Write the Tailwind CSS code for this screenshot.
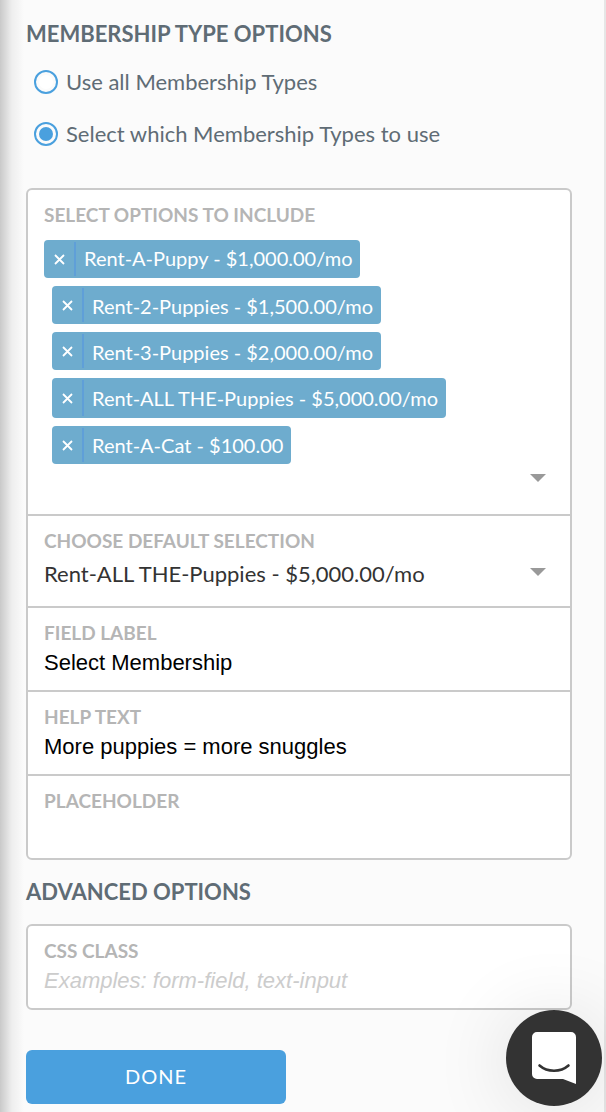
<!DOCTYPE html>
<html lang="en">
<head>
    <meta charset="UTF-8">
    <meta name="viewport" content="width=device-width, initial-scale=1.0">
    <title>Membership Type Options</title>
    <script src="https://cdn.jsdelivr.net/npm/@tailwindcss/browser@4"></script>
</head>
<body class="bg-[#fbfbfb] font-['Lato',sans-serif] text-[#5f6c75]">
    <form id="field-options" class="relative min-h-screen border-r-2 border-[#e6e6e6] pt-4 pr-8 pb-2 pl-[26px]">
        <!-- Shadow from the neighbouring panel -->
        <div class="pointer-events-none absolute inset-y-0 left-0 w-6 bg-linear-to-r from-black/20 via-black/5 to-transparent"></div>

        <h2 class="text-[22px] leading-9 font-bold">MEMBERSHIP TYPE OPTIONS</h2>
        <div class="flex flex-col gap-4 pt-3 pl-2">
            <label class="flex h-9 items-center gap-2 text-[22px]">
                <input type="radio" name="types" value="all" class="size-6 appearance-none rounded-full border-2 border-[#4aa0de] bg-white bg-clip-content p-[3px] checked:bg-[#4aa0de]">
                <span class="pb-[2px]">Use all Membership Types</span>
            </label>
            <label class="flex h-9 items-center gap-2 text-[22px]">
                <input type="radio" name="types" value="some" checked class="size-6 appearance-none rounded-full border-2 border-[#4aa0de] bg-white bg-clip-content p-[3px] checked:bg-[#4aa0de]">
                <span class="pb-[2px]">Select which Membership Types to use</span>
            </label>
        </div>

        <div class="mt-9 divide-y-2 divide-[#cacaca] rounded-md border-2 border-[#cacaca] bg-white">
            <div class="px-4 py-3">
                <h3 class="text-[19px] leading-[26px] font-bold text-[#b5b5b5]">SELECT OPTIONS TO INCLUDE</h3>
                <ul class="flex flex-col items-start gap-2 pt-3 text-[20px] text-white">
                    <li class="flex h-[38px] items-center rounded-sm bg-[#6eacce] pr-2">
                        <button type="button" aria-label="Remove Rent-A-Puppy" class="flex h-[34px] w-8 items-center justify-center border-r-2 border-[#5f9fd8]">
                            <svg class="size-3" viewBox="0 0 12 12" fill="none" stroke="currentColor" stroke-width="1.8"><path d="M2 2l9 9M11 2L2 11"/></svg>
                        </button>
                        <span class="pb-[2px] pl-2">Rent-A-Puppy - $1,000.00/mo</span>
                    </li>
                    <li class="ml-2 flex h-[38px] items-center rounded-sm bg-[#6eacce] pr-2">
                        <button type="button" aria-label="Remove Rent-2-Puppies" class="flex h-[34px] w-8 items-center justify-center border-r-2 border-[#5f9fd8]">
                            <svg class="size-3" viewBox="0 0 12 12" fill="none" stroke="currentColor" stroke-width="1.8"><path d="M2 2l9 9M11 2L2 11"/></svg>
                        </button>
                        <span class="pt-[2px] pl-2">Rent-2-Puppies - $1,500.00/mo</span>
                    </li>
                    <li class="ml-2 flex h-[38px] items-center rounded-sm bg-[#6eacce] pr-2">
                        <button type="button" aria-label="Remove Rent-3-Puppies" class="flex h-[34px] w-8 items-center justify-center border-r-2 border-[#5f9fd8]">
                            <svg class="size-3" viewBox="0 0 12 12" fill="none" stroke="currentColor" stroke-width="1.8"><path d="M2 2l9 9M11 2L2 11"/></svg>
                        </button>
                        <span class="pt-[2px] pl-2">Rent-3-Puppies - $2,000.00/mo</span>
                    </li>
                    <li class="ml-2 flex h-10 items-center rounded-sm bg-[#6eacce] pr-2">
                        <button type="button" aria-label="Remove Rent-ALL THE-Puppies" class="flex h-9 w-8 items-center justify-center border-r-2 border-[#5f9fd8]">
                            <svg class="size-3" viewBox="0 0 12 12" fill="none" stroke="currentColor" stroke-width="1.8"><path d="M2 2l9 9M11 2L2 11"/></svg>
                        </button>
                        <span class="pl-2">Rent-ALL THE-Puppies - $5,000.00/mo</span>
                    </li>
                    <li class="ml-2 flex h-[38px] items-center rounded-sm bg-[#6eacce] pr-2">
                        <button type="button" aria-label="Remove Rent-A-Cat" class="flex h-[34px] w-8 items-center justify-center border-r-2 border-[#5f9fd8]">
                            <svg class="size-3" viewBox="0 0 12 12" fill="none" stroke="currentColor" stroke-width="1.8"><path d="M2 2l9 9M11 2L2 11"/></svg>
                        </button>
                        <span class="pl-2">Rent-A-Cat - $100.00</span>
                    </li>
                </ul>
                <div class="flex h-[38px] items-start justify-end pt-[10px] pr-2">
                    <button type="button" id="open-options" aria-label="Show options">
                        <svg class="h-2 w-4" viewBox="0 0 16 8" fill="#999"><path d="M0 0h16L8 8z"/></svg>
                    </button>
                </div>
            </div>
            <div class="relative px-4 py-3">
                <label for="default-selection" class="block text-[19px] leading-[26px] font-bold text-[#b5b5b5]">CHOOSE DEFAULT SELECTION</label>
                <select id="default-selection" class="block h-10 w-full appearance-none pb-[2px] text-[22px] text-[#333] outline-none">
                    <option>Rent-A-Puppy - $1,000.00/mo</option>
                    <option>Rent-2-Puppies - $1,500.00/mo</option>
                    <option>Rent-3-Puppies - $2,000.00/mo</option>
                    <option selected>Rent-ALL THE-Puppies - $5,000.00/mo</option>
                    <option>Rent-A-Cat - $100.00</option>
                </select>
                <svg class="pointer-events-none absolute right-6 bottom-[30px] h-2 w-4" viewBox="0 0 16 8" fill="#999"><path d="M0 0h16L8 8z"/></svg>
            </div>
            <div class="px-4 py-3">
                <label for="field-label" class="block text-[19px] leading-[26px] font-bold text-[#b5b5b5]">FIELD LABEL</label>
                <input type="text" id="field-label" value="Select Membership" class="block h-8 w-full font-['Liberation_Sans',sans-serif] text-[22px] text-black outline-none">
            </div>
            <div class="px-4 py-3">
                <label for="help-text" class="block text-[19px] leading-[26px] font-bold text-[#b5b5b5]">HELP TEXT</label>
                <input type="text" id="help-text" value="More puppies = more snuggles" class="block h-8 w-full font-['Liberation_Sans',sans-serif] text-[22px] text-black outline-none">
            </div>
            <div class="px-4 py-3">
                <label for="placeholder" class="block text-[19px] leading-[26px] font-bold text-[#b5b5b5]">PLACEHOLDER</label>
                <input type="text" id="placeholder" class="block h-8 w-full font-['Liberation_Sans',sans-serif] text-[22px] text-black outline-none">
            </div>
        </div>

        <h2 class="pt-[14px] text-[22px] leading-9 font-bold">ADVANCED OPTIONS</h2>
        <div class="mt-[14px] rounded-md border-2 border-[#cacaca] bg-white px-4 py-3">
            <label for="css-class" class="block text-[19px] leading-[26px] font-bold text-[#b5b5b5]">CSS CLASS</label>
            <input type="text" id="css-class" placeholder="Examples: form-field, text-input" class="block h-8 w-full font-['Liberation_Sans',sans-serif] text-[22px] text-black outline-none placeholder:text-[#ccc] placeholder:italic">
        </div>

        <button type="submit" class="mt-10 h-[54px] w-[260px] rounded-md bg-[#4aa0de] pb-[2px] text-[20px] tracking-[1px] text-white">DONE</button>
    </form>

    <!-- Chat launcher -->
    <button type="button" aria-label="Open chat" class="fixed right-1 bottom-[6px] flex size-24 items-center justify-center rounded-full bg-[#333] shadow-[0_4px_80px_rgba(0,0,0,0.12)]">
        <svg class="h-[52px] w-11" viewBox="0 0 44 52"><path fill="#fff" d="M5 0h34a5 5 0 0 1 5 5v47l-13-5H5a5 5 0 0 1-5-5V5a5 5 0 0 1 5-5z"/><path fill="none" stroke="#333" stroke-width="2.6" stroke-linecap="round" d="M7.500 33.500c8 7 21 7 29 0"/></svg>
    </button>

    <script>
        document.getElementById('field-options').addEventListener('submit', function(event) {
            event.preventDefault();
        });
    </script>
</body>
</html>
